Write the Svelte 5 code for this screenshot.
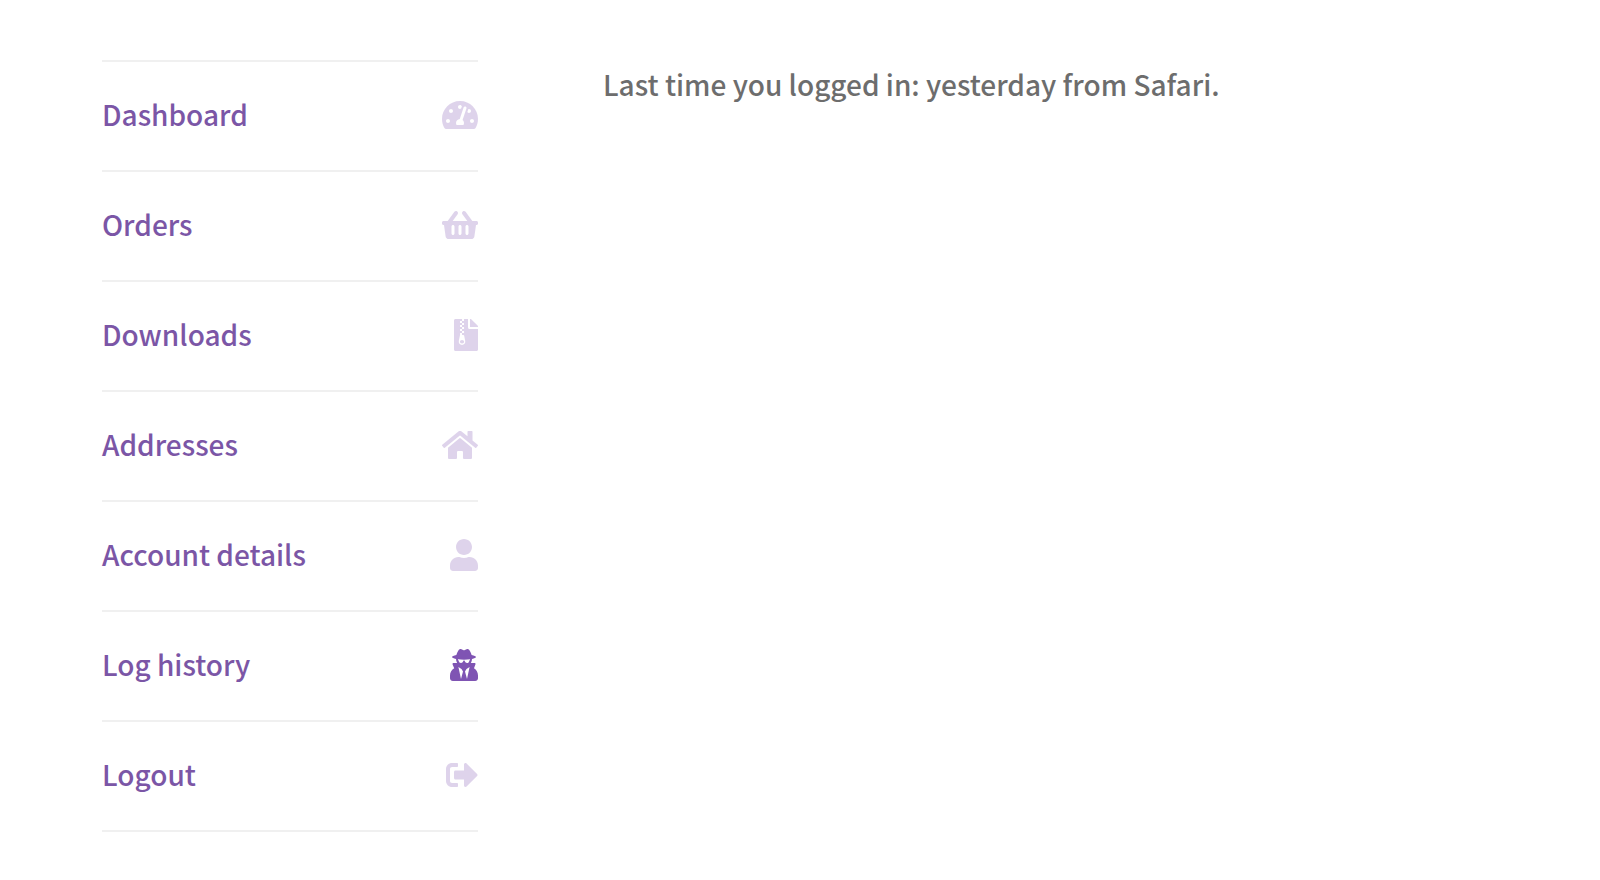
<script lang="ts">
  type MenuItem = {
    label: string;
    href: string;
    width: number; // viewBox width, every glyph is 512 high
    path: string;
    active?: boolean;
  };

  const items: MenuItem[] = [
    {
      label: 'Dashboard',
      href: '#dashboard',
      width: 576,
      path: 'M288 32C128.94 32 0 160.94 0 320c0 52.8 14.25 102.26 39.06 144.8 5.61 9.62 16.3 15.2 27.44 15.2h443c11.14 0 21.83-5.58 27.44-15.2C561.75 422.26 576 372.8 576 320c0-159.06-128.94-288-288-288zm0 64c14.71 0 26.58 10.13 30.32 23.65-1.11 2.26-2.64 4.23-3.45 6.67l-9.22 27.67c-5.13 3.49-10.97 6.01-17.64 6.01-17.67 0-32-14.33-32-32S270.33 96 288 96zM96 384c-17.67 0-32-14.33-32-32s14.33-32 32-32 32 14.33 32 32-14.33 32-32 32zm48-160c-17.67 0-32-14.33-32-32s14.33-32 32-32 32 14.33 32 32-14.33 32-32 32zm246.77-72.41l-61.33 184C343.13 347.33 352 364.54 352 384c0 11.72-3.38 22.55-8.88 32H232.88c-5.5-9.45-8.88-20.28-8.88-32 0-33.94 26.5-61.43 59.9-63.59l61.34-184.01c4.17-12.56 17.73-19.45 30.36-15.17 12.57 4.19 19.35 17.79 15.17 30.36zm14.66 57.2l15.52-46.55c3.47-1.29 7.13-2.23 11.05-2.23 17.67 0 32 14.33 32 32s-14.33 32-32 32c-11.38-.01-20.89-6.28-26.57-15.22zM480 384c-17.67 0-32-14.33-32-32s14.33-32 32-32 32 14.33 32 32-14.33 32-32 32z'
    },
    {
      label: 'Orders',
      href: '#orders',
      width: 576,
      path: 'M576 216v16c0 13.255-10.745 24-24 24h-8l-26.113 182.788C514.509 462.435 494.257 480 470.37 480H105.63c-23.887 0-44.139-17.565-47.518-41.212L32 256h-8c-13.255 0-24-10.745-24-24v-16c0-13.255 10.745-24 24-24h67.341l106.78-146.821c10.395-14.292 30.407-17.453 44.701-7.058 14.293 10.395 17.453 30.408 7.058 44.701L170.477 192h235.046L326.12 82.821c-10.395-14.292-7.234-34.306 7.059-44.701 14.291-10.395 34.306-7.235 44.701 7.058L484.659 192H552c13.255 0 24 10.745 24 24zM312 392V280c0-13.255-10.745-24-24-24s-24 10.745-24 24v112c0 13.255 10.745 24 24 24s24-10.745 24-24zm112 0V280c0-13.255-10.745-24-24-24s-24 10.745-24 24v112c0 13.255 10.745 24 24 24s24-10.745 24-24zm-224 0V280c0-13.255-10.745-24-24-24s-24 10.745-24 24v112c0 13.255 10.745 24 24 24s24-10.745 24-24z'
    },
    {
      label: 'Downloads',
      href: '#downloads',
      width: 384,
      path: 'M377 105L279.1 7c-4.5-4.5-10.6-7-17-7H256v128h128v-6.1c0-6.3-2.5-12.4-7-16.9zM128.4 336c-17.9 0-32.4 12.1-32.4 27 0 15 14.6 27 32.5 27s32.4-12.1 32.4-27-14.6-27-32.5-27zM224 136V0h-63.6v32h-32V0H24C10.7 0 0 10.7 0 24v464c0 13.3 10.7 24 24 24h336c13.3 0 24-10.7 24-24V160H248c-13.2 0-24-10.8-24-24zM95.9 32h32v32h-32zm32.3 384c-33.2 0-58-30.4-51.4-62.9L96.4 256v-32h32v-32h-32v-32h32v-32h-32V96h32V64h32v32h-32v32h32v32h-32v32h32v32h-32v32h22.1c5.7 0 10.7 4.1 11.8 9.7l17.3 87.7c6.4 32.4-18.4 62.6-51.4 62.6z'
    },
    {
      label: 'Addresses',
      href: '#addresses',
      width: 576,
      path: 'M280.37 148.26L96 300.11V464a16 16 0 0 0 16 16l112.06-.29a16 16 0 0 0 15.92-16V368a16 16 0 0 1 16-16h64a16 16 0 0 1 16 16v95.64a16 16 0 0 0 16 16.05L464 480a16 16 0 0 0 16-16V300L295.67 148.26a12.19 12.19 0 0 0-15.3 0zM571.6 251.47L488 182.56V44.05a12 12 0 0 0-12-12h-56a12 12 0 0 0-12 12v72.61L318.47 43a48 48 0 0 0-61 0L4.34 251.47a12 12 0 0 0-1.6 16.9l25.5 31A12 12 0 0 0 45.15 301l235.22-193.74a12.19 12.19 0 0 1 15.3 0L530.9 301a12 12 0 0 0 16.9-1.6l25.5-31a12 12 0 0 0-1.7-16.93z'
    },
    {
      label: 'Account details',
      href: '#account-details',
      width: 448,
      path: 'M224 256c70.7 0 128-57.3 128-128S294.7 0 224 0 96 57.3 96 128s57.3 128 128 128zm89.6 32h-16.7c-22.2 10.2-46.9 16-72.9 16s-50.6-5.8-72.9-16h-16.7C60.2 288 0 348.2 0 422.4V464c0 26.5 21.5 48 48 48h352c26.5 0 48-21.5 48-48v-41.6c0-74.2-60.2-134.4-134.4-134.4z'
    },
    {
      label: 'Log history',
      href: '#log-history',
      width: 448,
      active: true,
      path: 'M383.9 308.3l23.9-62.6c4-10.5-3.7-21.7-15-21.7h-58.5c11-18.9 17.8-40.6 17.8-64v-.3c39.2-7.8 64-19.1 64-31.7 0-13.3-27.3-25.1-70.1-33-9.2-32.8-27-65.8-40.6-82.8-9.5-11.9-25.9-15.6-39.5-8.8l-27.6 13.8c-9 4.5-19.6 4.5-28.6 0L182.1 3.4c-13.6-6.8-30-3.1-39.5 8.8-13.5 17-31.4 50-40.6 82.8-42.7 7.9-70 19.7-70 33 0 12.6 24.8 23.9 64 31.7v.3c0 23.4 6.8 45.1 17.8 64H56.3c-11.5 0-19.2 11.7-14.7 22.3l25.8 60.2C27.3 329.8 0 372.7 0 422.4v44.8C0 491.9 20.1 512 44.8 512h358.4c24.7 0 44.8-20.1 44.8-44.8v-44.8c0-48.4-25.8-90.4-64.1-114.1zM176 480l-41.6-192 49.6 32 24 40-32 120zm96 0l-32-120 24-40 49.6-32L272 480zm41.7-298.5c-3.9 11.9-7 24.6-16.5 33.4-10.1 9.3-48 22.4-64-25-2.8-8.4-15.4-8.4-18.3 0-17 50.2-56 32.4-64 25-9.5-8.8-12.7-21.5-16.5-33.4-.8-2.5-6.3-5.7-6.3-5.8v-10.8c28.3 3.6 61 5.8 96 5.8s67.7-2.1 96-5.8v10.8c-.1.1-5.6 3.2-6.4 5.8z'
    },
    {
      label: 'Logout',
      href: '#logout',
      width: 512,
      path: 'M497 273L329 441c-15 15-41 4.5-41-17v-96H152c-13.3 0-24-10.7-24-24v-96c0-13.3 10.7-24 24-24h136V88c0-21.4 25.9-32 41-17l168 168c9.3 9.4 9.3 24.6 0 34zM192 436v-40c0-6.6-5.4-12-12-12H96c-17.7 0-32-14.3-32-32V160c0-17.7 14.3-32 32-32h84c6.6 0 12-5.4 12-12V76c0-6.6-5.4-12-12-12H96c-53 0-96 43-96 96v192c0 53 43 96 96 96h84c6.6 0 12-5.4 12-12z'
    }
  ];
</script>

<div class="account">
  <nav class="menu" aria-label="Account">
    <ul>
      {#each items as item}
        <li>
          <a href={item.href} class:active={item.active} aria-current={item.active ? 'page' : undefined}>
            <span>{item.label}</span>
            <svg viewBox="0 0 {item.width} 512" aria-hidden="true">
              <path d={item.path} />
            </svg>
          </a>
        </li>
      {/each}
    </ul>
  </nav>

  <main class="content">
    <p>Last time you logged in: yesterday from Safari.</p>
  </main>
</div>

<style>
  :global(body) {
    margin: 0;
    background: #fff;
  }

  .account {
    display: flex;
    align-items: flex-start;
    gap: 125px;
    padding: 60px 102px 48px;
    font-family: 'Source Sans Pro', 'Noto Sans CJK SC', sans-serif;
    font-size: 28px;
    font-weight: 500;
    line-height: 48px;
    color: #6d6d6d;
  }

  .menu {
    flex: 0 0 376px;
  }

  ul {
    margin: 0;
    padding: 0;
    list-style: none;
    border-top: 2px solid #f0f0f0;
  }

  li {
    border-bottom: 2px solid #f0f0f0;
  }

  a {
    display: flex;
    align-items: center;
    justify-content: space-between;
    padding: 28px 0 32px;
    color: #7b56a6;
    text-decoration: none;
  }

  svg {
    height: 32px;
    margin-top: 2px;
    fill: #7f54b3;
    opacity: 0.25;
  }

  a:hover svg,
  .active svg {
    opacity: 1;
  }

  .content {
    flex: 1;
    min-width: 0;
  }

  p {
    margin: 0;
  }
</style>
